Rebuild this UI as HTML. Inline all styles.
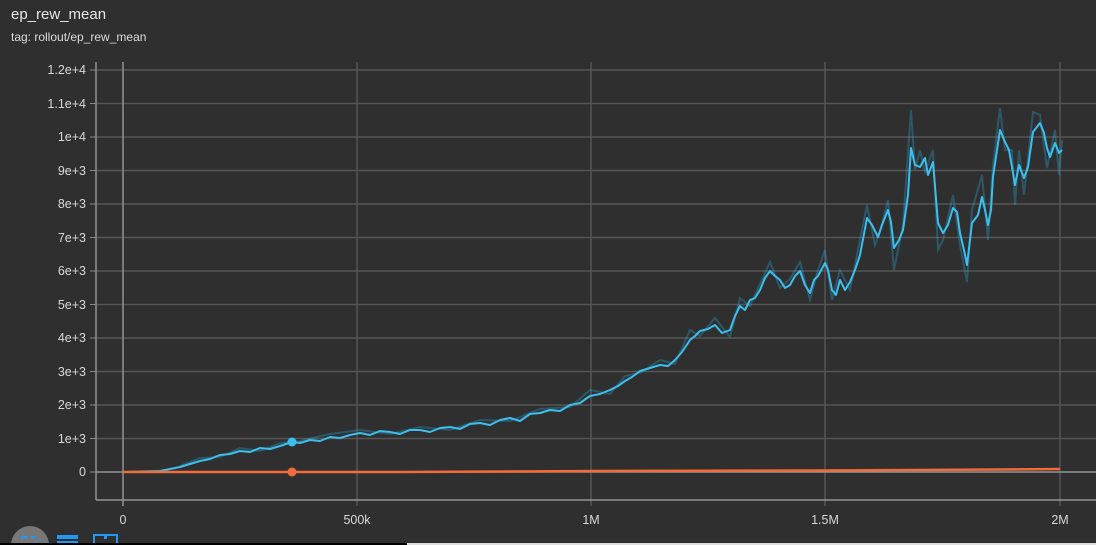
<!DOCTYPE html>
<html><head><meta charset="utf-8"><style>
html,body{margin:0;padding:0;width:1096px;height:545px;overflow:hidden;background:#2f2f2f;font-family:"Liberation Sans",sans-serif}
.t1{position:absolute;left:11px;top:6px;font-size:15px;color:#e8e8e8}
.t2{position:absolute;left:11px;top:30px;font-size:12px;color:#dcdcdc}
</style></head><body>
<div class="t1">ep_rew_mean</div>
<div class="t2">tag: rollout/ep_rew_mean</div>
<svg width="1096" height="545" style="position:absolute;left:0;top:0">
<g stroke="#555" stroke-width="1.5">
<line x1="96" y1="70" x2="1096" y2="70"/><line x1="96" y1="103.5" x2="1096" y2="103.5"/><line x1="96" y1="137" x2="1096" y2="137"/><line x1="96" y1="170.5" x2="1096" y2="170.5"/><line x1="96" y1="204" x2="1096" y2="204"/><line x1="96" y1="237.5" x2="1096" y2="237.5"/><line x1="96" y1="271" x2="1096" y2="271"/><line x1="96" y1="304.5" x2="1096" y2="304.5"/><line x1="96" y1="338" x2="1096" y2="338"/><line x1="96" y1="371.5" x2="1096" y2="371.5"/><line x1="96" y1="405" x2="1096" y2="405"/><line x1="96" y1="438.5" x2="1096" y2="438.5"/>
<line x1="357" y1="62" x2="357" y2="506"/><line x1="591" y1="62" x2="591" y2="506"/><line x1="825" y1="62" x2="825" y2="506"/><line x1="1060" y1="62" x2="1060" y2="506"/>
</g>
<g stroke="#949494" stroke-width="1.5">
<line x1="96" y1="472" x2="1096" y2="472"/>
<line x1="123" y1="62" x2="123" y2="506"/>
<line x1="96" y1="62" x2="96" y2="500"/>
<line x1="96" y1="500" x2="1096" y2="500"/>
</g>
<g stroke="#8a8a8a" stroke-width="1">
<line x1="90" y1="70" x2="96" y2="70"/><line x1="90" y1="103.5" x2="96" y2="103.5"/><line x1="90" y1="137" x2="96" y2="137"/><line x1="90" y1="170.5" x2="96" y2="170.5"/><line x1="90" y1="204" x2="96" y2="204"/><line x1="90" y1="237.5" x2="96" y2="237.5"/><line x1="90" y1="271" x2="96" y2="271"/><line x1="90" y1="304.5" x2="96" y2="304.5"/><line x1="90" y1="338" x2="96" y2="338"/><line x1="90" y1="371.5" x2="96" y2="371.5"/><line x1="90" y1="405" x2="96" y2="405"/><line x1="90" y1="438.5" x2="96" y2="438.5"/><line x1="90" y1="472" x2="96" y2="472"/>
</g>
<g fill="#d8d8d8" font-size="12.5" text-anchor="end" font-family="Liberation Sans,sans-serif">
<text x="86" y="74">1.2e+4</text><text x="86" y="108">1.1e+4</text><text x="86" y="141">1e+4</text><text x="86" y="175">9e+3</text><text x="86" y="208">8e+3</text><text x="86" y="242">7e+3</text><text x="86" y="275">6e+3</text><text x="86" y="309">5e+3</text><text x="86" y="342">4e+3</text><text x="86" y="376">3e+3</text><text x="86" y="409">2e+3</text><text x="86" y="443">1e+3</text><text x="86" y="476">0</text>
</g>
<g fill="#d8d8d8" font-size="12.5" text-anchor="middle" font-family="Liberation Sans,sans-serif">
<text x="123" y="524">0</text><text x="357" y="524">500k</text><text x="591" y="524">1M</text><text x="825" y="524">1.5M</text><text x="1060" y="524">2M</text>
</g>
<polyline fill="none" stroke="#29b6e8" stroke-opacity="0.3" stroke-width="2" points="180,466 200,458 220,457 240,448 260,451 280,443 300,441 330,434 360,430 390,434 420,427 450,430 480,420 510,421 540,409 570,407 590,390 610,394 625,376 640,373 660,360 675,364 690,330 700,336 715,318 730,337 740,298 750,306 760,284 770,262 780,288 790,279 800,262 810,300 818,270 825,250 832,300 840,270 850,290 860,240 867,205 875,245 880,232 888,200 894,270 903,225 911,110 915,170 920,150 925,172 933,150 938,250 943,240 953,195 960,245 967,282 972,210 982,175 988,240 993,165 1000,108 1005,150 1012,150 1015,205 1019,150 1024,195 1033,112 1040,115 1047,168 1055,130 1059,175 1062,140"/>
<polyline fill="none" stroke="#3cbfee" stroke-width="2" stroke-linejoin="round" points="123,472 160,471 180,467 200,461 210,459 220,455 230,454 240,451 250,452 260,448 270,449 280,446 292,442 300,443 310,440 320,441 330,437 340,438 350,435 360,433 370,435 380,431 390,432 400,434 410,430 420,430 430,432 440,428 450,427 460,429 470,424 480,423 490,425 500,420 510,418 520,421 530,414 540,413 550,410 560,411 570,405 580,403 590,396 600,394 610,390 618,386 625,381 632,377 640,371 650,368 660,365 668,366 675,360 682,352 690,340 695,336 700,331 708,329 715,325 722,333 730,330 735,316 740,306 745,310 750,300 755,298 760,290 765,278 770,271 775,276 780,280 785,288 790,285 795,276 800,271 805,285 810,293 814,280 818,276 825,263 828,270 832,290 836,295 840,280 845,290 850,282 855,270 860,255 867,218 872,225 878,237 882,225 888,210 891,222 894,248 899,240 903,230 908,195 911,148 915,165 920,167 925,158 928,175 933,162 938,223 943,233 948,225 953,208 957,212 960,233 964,250 967,265 970,240 972,223 978,215 982,197 985,210 988,225 991,210 993,177 1000,130 1005,142 1009,150 1012,167 1015,185 1019,165 1024,178 1028,167 1033,132 1040,123 1044,133 1047,148 1050,157 1055,143 1059,153 1062,150"/>
<polyline fill="none" stroke="#f26b3a" stroke-width="2.5" points="123,472 400,472 600,471 825,470.5 1000,469.5 1060,469"/>
<circle cx="292" cy="472" r="4.5" fill="#f26b3a"/>
<circle cx="292" cy="442" r="4.5" fill="#3cbfee"/>
<circle cx="30" cy="545" r="19" fill="#777"/>
<rect x="22" y="537" width="14" height="10" fill="none" stroke="#2196f3" stroke-width="2" stroke-dasharray="5 4"/>
<rect x="57" y="535" width="21" height="4" fill="#2196f3"/>
<rect x="57" y="541" width="21" height="4" fill="#2196f3"/>
<rect x="94" y="535" width="23" height="14" fill="none" stroke="#2196f3" stroke-width="2"/>
<rect x="104" y="536" width="3" height="3" fill="#2196f3"/>
<rect x="0" y="543" width="1096" height="2" fill="#000"/>
<rect x="407" y="543" width="689" height="2" fill="#ddd"/>
</svg>
</body></html>
